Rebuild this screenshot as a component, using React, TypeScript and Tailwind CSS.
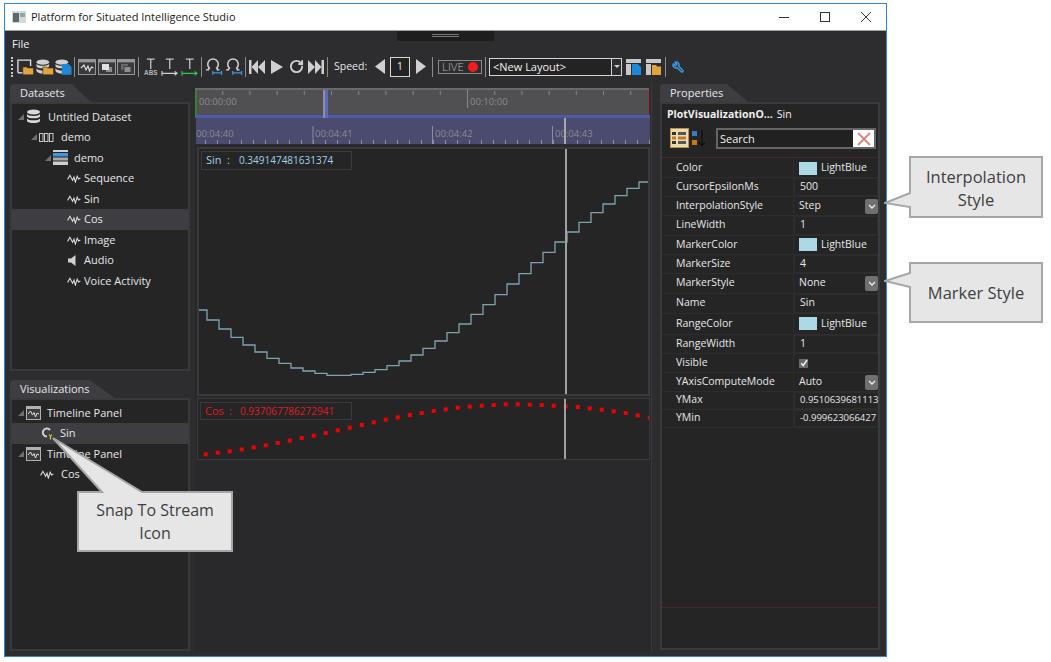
import React from "react";
import { RotateCw, Wrench } from "lucide-react";

const sinY = [310, 320, 329, 337.3, 345, 352, 358.3, 363.3, 368, 371, 373.3, 375.3, 375.3, 374.3, 372.3, 369.7, 365.7, 361, 355, 348.3, 341, 332.7, 324, 314.3, 304.7, 294.7, 284, 273.7, 262.7, 252.3, 242, 232, 222.3, 212.7, 204, 195.7, 188.3, 182];
const cosY = [460, 455, 451, 445, 439, 433, 426, 419, 411, 404, 396, 388, 380, 372, 364, 356, 349, 342, 336, 330, 325, 320, 317, 314, 312, 310, 310, 311, 312, 314, 316, 318, 322, 326, 331, 336, 343, 350];

const stepPath = () => {
  let d = `M199 ${sinY[0]}`;
  sinY.forEach((y, i) => {
    const x = 207 + i * 12;
    d += ` H${x} V${sinY[i + 1] ?? y}`;
  });
  return d.replace(/ H[\d.]+ V[\d.]+$/, " H648");
};

const Wave = () => (
  <svg width="14" height="10" viewBox="0 0 15 11" fill="none" stroke="#dcdcdc" strokeWidth="1.2" className="shrink-0">
    <polyline points="0.5,7 3,2.5 6,8 7.5,4.5 9,10 11,3.5 12.5,6.5 14.5,5.5" />
  </svg>
);

const Database = ({ size = 15, color = "#d8d8d8" }: { size?: number; color?: string }) => (
  <svg width={size} height={size} viewBox="0 0 15 15" className="shrink-0">
    <ellipse cx="7.5" cy="3" rx="6.5" ry="2.6" fill={color} />
    <path d="M1 5 C2 7.6 13 7.6 14 5 V7.4 C13 10 2 10 1 7.4Z" fill={color} />
    <path d="M1 9.4 C2 12 13 12 14 9.4 V12 C13 14.8 2 14.8 1 12Z" fill={color} />
  </svg>
);

const TreeArrow = () => (
  <svg width="6" height="6" viewBox="0 0 6 6" className="shrink-0">
    <polygon points="6,0 6,6 0,6" fill="#6f6f72" />
  </svg>
);

const PanelIcon = () => (
  <svg width="15" height="14" viewBox="0 0 15 14" className="shrink-0">
    <rect x="0.5" y="0.5" width="14" height="13" fill="#3c3c3e" stroke="#b0b0b0" />
    <rect x="1" y="1" width="13" height="2" fill="#b0b0b0" />
    <polyline points="2,8 4.5,5 6.5,9 8,6.5 9.5,11 11,7 13,8" fill="none" stroke="#e0e0e0" />
  </svg>
);

const Bars = () => (
  <svg width="15" height="15" viewBox="0 0 15 15" className="shrink-0">
    <rect y="0" width="15" height="2" fill="#d0d0d0" />
    <rect y="3" width="15" height="3.5" fill="#3a96dd" />
    <rect y="7.5" width="15" height="3" fill="#a8a8a8" />
    <rect y="11.5" width="15" height="3.5" fill="#d0d0d0" />
  </svg>
);

const Magnet = ({ small = false }: { small?: boolean }) =>
  small ? (
    <svg width="12" height="13" viewBox="0 0 12 13" className="shrink-0">
      <path d="M8 3 A4 4 0 1 0 5 9.5" fill="none" stroke="#d0d0d0" strokeWidth="2" />
      <path d="M7 7.5 L8.5 9.5 L10 7.5 M8.5 9.5 V12.5" fill="none" stroke="#d4c820" strokeWidth="1.2" />
    </svg>
  ) : (
    <svg width="20" height="20" viewBox="0 0 20 20">
      <path d="M4 13 L5.5 11 A5.4 5.4 0 1 1 13 11 L14.5 13" fill="none" stroke="#d0d0d0" strokeWidth="1.6" />
      <path d="M2 13 H5 M13 13 H16" stroke="#d0d0d0" strokeWidth="1.2" />
      <path d="M9 14 V18 M9 16 H18 M18 14 V18" fill="none" stroke="#3a96dd" strokeWidth="1.4" />
    </svg>
  );

const Tool = ({ children }: { children: React.ReactNode }) => (
  <div className="w-[19.5px] h-[20px] flex items-center justify-center shrink-0">{children}</div>
);

const Sep = ({ className }: { className: string }) => <div className={`w-px h-[20px] bg-[#8c8c8c] shrink-0 ${className}`} />;

const Folder = ({ x, y }: { x: number; y: number }) => (
  <path d={`M${x} ${y} h4 l1 1 h6 v7 h-11z`} fill="#e3a33a" stroke="#2d2d30" strokeWidth="0.6" />
);

const Save = ({ x, y }: { x: number; y: number }) => (
  <path d={`M${x} ${y} h7 l3 3 v8 h-10z`} fill="#1f87d8" />
);

const DbTool = ({ save }: { save?: boolean }) => (
  <svg width="20" height="20" viewBox="0 0 20 20">
    <ellipse cx="8" cy="5" rx="6.5" ry="2.6" fill="#d0d0d0" />
    <path d="M1.5 7 C3 9.4 13 9.4 14.5 7 V9.4 C13 12 3 12 1.5 9.4Z" fill="#d0d0d0" />
    <path d="M1.5 11.4 C3 14 9 14 10 13.6 V16.6 C7 17 3 16.6 1.5 14Z" fill="#d0d0d0" />
    {save ? <Save x={8} y={7} /> : <Folder x={8} y={10} />}
  </svg>
);

const BoardTool = ({ kind }: { kind: "wave" | "front" | "back" }) => (
  <svg width="19" height="18" viewBox="0 0 19 18">
    <rect x="0.5" y="1.5" width="17" height="15" fill="#3a3a3c" stroke="#969696" />
    <rect x="1" y="2" width="16" height="2.4" fill="#969696" />
    {kind === "wave" && <polyline points="3,10 6,7 8,12 10,8 11.5,13 13.5,9 15.5,10" fill="none" stroke="#e4e4e4" strokeWidth="1.1" />}
    {kind === "front" && (
      <>
        <rect x="8" y="9" width="6" height="5" fill="#8a8a8a" />
        <rect x="4" y="6" width="7" height="6" fill="#e0e0e0" />
      </>
    )}
    {kind === "back" && (
      <>
        <rect x="4" y="6" width="7" height="6" fill="#6a6a6a" />
        <rect x="7" y="8.5" width="7" height="6" fill="#8e8e8e" stroke="#3a3a3c" />
      </>
    )}
  </svg>
);

const TextTool = ({ kind }: { kind: "abs" | "white" | "green" }) => {
  const c = kind === "green" ? "#35c44a" : "#d0d0d0";
  return (
    <svg width="20" height="20" viewBox="0 0 20 20">
      <path d="M6 2 H14 M10 2 V12" fill="none" stroke="#c8c8c8" strokeWidth="1.3" />
      {kind === "abs" ? (
        <text x="10" y="18" textAnchor="middle" fontSize="6.5" fontWeight="700" fontFamily="'Liberation Sans', sans-serif" fill="#b8b8b8">
          ABS
        </text>
      ) : (
        <path d="M2 14 V19 M2 16.5 H17 M15 14.5 L17.5 16.5 L15 18.5" fill="none" stroke={c} strokeWidth="1.2" />
      )}
    </svg>
  );
};

const Nav = ({ kind }: { kind: "first" | "play" | "last" }) => (
  <svg width="18" height="18" viewBox="0 0 18 18" fill="#cfcfcf">
    {kind === "first" && <path d="M1 2 H3.5 V16 H1Z M3.5 9 L10 2 V16Z M10 9 L17 2 V16Z" />}
    {kind === "play" && <path d="M3 2 L15 9 L3 16Z" />}
    {kind === "last" && <path d="M1 2 L8 9 L1 16Z M8 2 L14.5 9 L8 16Z M14.5 2 H17 V16 H14.5Z" />}
  </svg>
);

type TreeItem = { label: string; icon: React.ReactNode; row: string; arrow?: boolean; selected?: boolean; gap: string };

const datasetRows: TreeItem[] = [
  { label: "Untitled Dataset", icon: <Database />, row: "pl-[6px]", arrow: true, gap: "gap-[4px]" },
  {
    label: "demo",
    icon: (
      <svg width="15" height="9" viewBox="0 0 15 9" fill="none" stroke="#c8c8c8" className="shrink-0">
        <rect x="0.5" y="0.5" width="3.5" height="8" />
        <rect x="5.5" y="0.5" width="3.5" height="8" />
        <rect x="10.5" y="0.5" width="3.5" height="8" />
      </svg>
    ),
    row: "pl-[19px]",
    arrow: true,
    gap: "gap-[4px]",
  },
  { label: "demo", icon: <Bars />, row: "pl-[33px]", arrow: true, gap: "gap-[3px]" },
  { label: "Sequence", icon: <Wave />, row: "pl-[55px]", gap: "gap-0" },
  { label: "Sin", icon: <Wave />, row: "pl-[55px]", gap: "gap-0" },
  { label: "Cos", icon: <Wave />, row: "pl-[55px]", selected: true, gap: "gap-0" },
  { label: "Image", icon: <Wave />, row: "pl-[55px]", gap: "gap-0" },
  {
    label: "Audio",
    icon: (
      <svg width="14" height="13" viewBox="0 0 14 13" className="shrink-0">
        <path d="M1 4.5 H4 L8.5 1 V12 L4 8.5 H1Z" fill="#d0d0d0" />
      </svg>
    ),
    row: "pl-[55px]",
    gap: "gap-0",
  },
  { label: "Voice Activity", icon: <Wave />, row: "pl-[55px]", gap: "gap-0" },
];

const vizRows: TreeItem[] = [
  { label: "Timeline Panel", icon: <PanelIcon />, row: "pl-[6px]", arrow: true, gap: "gap-[3px]" },
  { label: "Sin", icon: <Magnet small />, row: "pl-[30px]", selected: true, gap: "gap-[3px]" },
  { label: "Timeline Panel", icon: <PanelIcon />, row: "pl-[6px]", arrow: true, gap: "gap-[3px]" },
  { label: "Cos", icon: <Wave />, row: "pl-[28px]", gap: "gap-[4px]" },
];

const Tree = ({ rows }: { rows: TreeItem[] }) => (
  <div className="pt-[2.5px]">
    {rows.map((r, i) => (
      <div key={i} className={`h-[20.5px] flex items-center ${r.row} ${r.selected ? "bg-[#3e3e42]" : ""}`}>
        {r.arrow && <span className="mr-[2px]"><TreeArrow /></span>}
        <span className={`flex items-center ${r.gap}`}>
          <span className="mr-[3px] flex">{r.icon}</span>
          <span className="text-[11px] text-[#e6e6e6] whitespace-nowrap">{r.label}</span>
        </span>
      </div>
    ))}
  </div>
);

const Tab = ({ label, width }: { label: string; width: string }) => (
  <div className={`h-[18px] ${width} bg-[#3e3e42] rounded-tl-[4px] [clip-path:polygon(0_0,76%_0,100%_100%,0_100%)] flex items-center pl-[10px] text-[11px] text-[#e6e6e6] shrink-0`}>
    {label}
  </div>
);

const Swatch = () => (
  <div className="flex items-center gap-[4px]">
    <div className="w-[18px] h-[13px] bg-[#add8e6]" />
    <span>LightBlue</span>
  </div>
);

const Chevron = () => (
  <div className="w-[13px] h-[15px] rounded-[2px] bg-[#707070] flex items-center justify-center absolute right-0 top-[2px]">
    <svg width="8" height="5" viewBox="0 0 8 5" fill="none" stroke="#f0f0f0" strokeWidth="1.3">
      <path d="M1 1 L4 4 L7 1" />
    </svg>
  </div>
);

type Prop = { name: string; h: string; value?: string; kind?: "color" | "combo" | "check"; box?: boolean; narrow?: boolean };

const props: Prop[] = [
  { name: "Color", h: "h-[19px]", kind: "color" },
  { name: "CursorEpsilonMs", h: "h-[19px]", value: "500", box: true },
  { name: "InterpolationStyle", h: "h-[19px]", value: "Step", kind: "combo" },
  { name: "LineWidth", h: "h-[19.5px]", value: "1", box: true },
  { name: "MarkerColor", h: "h-[19.5px]", kind: "color" },
  { name: "MarkerSize", h: "h-[19px]", value: "4", box: true },
  { name: "MarkerStyle", h: "h-[19.5px]", value: "None", kind: "combo" },
  { name: "Name", h: "h-[20px]", value: "Sin", box: true },
  { name: "RangeColor", h: "h-[21.5px]", kind: "color" },
  { name: "RangeWidth", h: "h-[19px]", value: "1", box: true },
  { name: "Visible", h: "h-[19px]", kind: "check" },
  { name: "YAxisComputeMode", h: "h-[18.5px]", value: "Auto", kind: "combo" },
  { name: "YMax", h: "h-[18px]", value: "0.9510639681113", box: true, narrow: true },
  { name: "YMin", h: "h-[18px]", value: "-0.999623066427", box: true, narrow: true },
];

const PropRow = ({ p }: { p: Prop }) => (
  <div className={`${p.h} flex items-stretch border-b border-[#2d2d30] text-[10.5px] text-[#e6e6e6]`}>
    <div className="w-[132px] pl-[14px] flex items-center border-r border-[#2d2d30] shrink-0 whitespace-nowrap">{p.name}</div>
    <div className={`relative flex-1 min-w-0 pl-[5px] flex items-center whitespace-nowrap ${p.box ? "border border-[#2d2d30]" : ""} ${p.narrow ? "text-[9.5px]" : ""}`}>
      {p.kind === "color" && <Swatch />}
      {p.kind === "check" && (
        <div className="w-[9px] h-[9px] bg-[#6a6a6a] flex items-center justify-center">
          <svg width="8" height="8" viewBox="0 0 8 8" fill="none" stroke="#f0f0f0" strokeWidth="1.5">
            <path d="M1.2 4.2 L3.2 6.5 L7 1" />
          </svg>
        </div>
      )}
      {p.value}
      {p.kind === "combo" && <Chevron />}
    </div>
  </div>
);

const Timeline = () => {
  const topTicks = Array.from({ length: 17 }, (_, i) => 196 + (i + 1) * 27.2);
  const minorTicks = Array.from({ length: 38 }, (_, i) => 206 + i * 12);
  const labelClass = { fontSize: 9.5, fill: "#8a8a8c" };
  return (
    <svg width="456" height="61" viewBox="196 84 456 61" className="block shrink-0">
      <rect x="196" y="84" width="456" height="61" fill="#2d2d30" />
      <rect x="196" y="88" width="454" height="2" fill="#6a6a6a" />
      <rect x="197" y="90" width="452" height="25" fill="#504f52" />
      <rect x="196" y="90" width="1.5" height="28" fill="#2f8f2f" />
      <rect x="649" y="90" width="1" height="25" fill="#a03030" />
      <rect x="197" y="115" width="454" height="3" fill="#4f5aa6" />
      <rect x="197" y="118" width="454" height="26" fill="#4a4b6e" />
      {topTicks.map((x) => (
        <rect key={x} x={x} y={x === 468 ? 90 : 91} width="1" height={x === 468 ? 18 : 4} fill="#87868a" />
      ))}
      <rect x="324" y="90" width="2.5" height="28" fill="#8e8ea8" />
      <rect x="326.5" y="90" width="2.5" height="28" fill="#5a68c4" />
      <text x="200" y="105" style={labelClass}>00:00:00</text>
      <text x="471" y="105" style={labelClass}>00:10:00</text>
      {minorTicks.map((x) => (
        <rect key={x} x={x} y="140" width="1" height="4" fill="#8d8ea6" />
      ))}
      {[313.5, 433, 553].map((x) => (
        <rect key={x} x={x} y="126" width="1" height="18" fill="#8d8ea6" />
      ))}
      <text x="197" y="137" style={labelClass}>00:04:40</text>
      <text x="316" y="137" style={labelClass}>00:04:41</text>
      <text x="436" y="137" style={labelClass}>00:04:42</text>
      <text x="556" y="137" style={labelClass}>00:04:43</text>
      <rect x="565" y="118" width="2" height="26" fill="#a8a8a8" />
    </svg>
  );
};

type CalloutProps = { box: string; viewBox: string; w: number; h: number; path: string; text: string; label: React.ReactNode };

const Callout = ({ box, viewBox, w, h, path, text, label }: CalloutProps) => (
  <div className={`absolute ${box}`}>
    <svg width={w} height={h} viewBox={viewBox} className="absolute inset-0">
      <path d={path} fill="#e6e6e6" stroke="#a6a6a6" strokeWidth="2" />
    </svg>
    <div className={`absolute ${text} flex items-center justify-center text-center leading-[23px] text-[#404040] font-['Open_Sans',sans-serif]`}>
      {label}
    </div>
  </div>
);

export default function App() {
  return (
    <div className="relative w-[1051px] h-[662px] bg-white pl-[4px] pt-[3px] overflow-hidden font-['Open_Sans','Noto_Sans',sans-serif]">
      <div className="w-[883px] h-[654px] border border-[#2b88d8] flex flex-col">
        <div className="h-[27px] bg-white border-b border-[#a0a0a0] flex items-center shrink-0">
          <svg width="14" height="12" viewBox="0 0 14 12" className="ml-[7px] mr-[5px]">
            <rect width="14" height="12" fill="#d4d8d8" />
            <rect x="1" y="2" width="6" height="9" fill="#5a6a6a" />
            <rect x="8" y="2" width="5" height="4" fill="#8aa8a0" />
          </svg>
          <span className="text-[11px] text-[#1a1a1a]">Platform for Situated Intelligence Studio</span>
          <div className="ml-auto flex items-center h-full">
            <div className="w-[40px] flex justify-center mr-[1px]">
              <div className="w-[10px] h-px bg-[#333]" />
            </div>
            <div className="w-[40px] flex justify-center">
              <div className="w-[10px] h-[10px] border border-[#333]" />
            </div>
            <div className="w-[41px] flex justify-center">
              <svg width="10" height="10" viewBox="0 0 10 10" stroke="#333">
                <path d="M0 0 L10 10 M10 0 L0 10" />
              </svg>
            </div>
          </div>
        </div>

        <div className="relative flex-1 bg-[#2d2d30] min-h-0 flex flex-col">
          <div className="absolute left-[392px] top-0 w-[97px] h-[10px] bg-[#1e1e1f] flex flex-col items-center pt-[3px] gap-[1px]">
            <div className="w-[27px] h-px bg-[#777]" />
            <div className="w-[27px] h-px bg-[#777]" />
          </div>
          <div className="h-[23px] pl-[7px] pt-[5px] text-[11px] leading-[15px] text-[#f0f0f0] shrink-0">File</div>

          <div className="h-[25px] flex items-center pl-[6px] shrink-0">
            <div className="w-[2px] h-[20px] mr-[2.25px] border-l-2 border-dotted border-[#c8c8c8] shrink-0" />
            <Tool>
              <svg width="20" height="20" viewBox="0 0 20 20">
                <path d="M3 16 V3 H16 V9" fill="none" stroke="#e0e0e0" strokeWidth="1.4" />
                <path d="M3 16 H8" stroke="#e0e0e0" strokeWidth="1.4" />
                <Folder x={8} y={10} />
              </svg>
            </Tool>
            <Tool><DbTool /></Tool>
            <Tool><DbTool save /></Tool>
            <Sep className="ml-0 mr-[3.25px]" />
            <Tool><BoardTool kind="wave" /></Tool>
            <Tool><BoardTool kind="front" /></Tool>
            <Tool><BoardTool kind="back" /></Tool>
            <Sep className="ml-[1.5px] mr-[1.5px]" />
            <Tool><TextTool kind="abs" /></Tool>
            <Tool><TextTool kind="white" /></Tool>
            <Tool><TextTool kind="green" /></Tool>
            <Sep className="ml-[2px] mr-[2px]" />
            <Tool><Magnet /></Tool>
            <Tool><Magnet /></Tool>
            <Sep className="ml-[2px] mr-[1.5px]" />
            <Tool><Nav kind="first" /></Tool>
            <Tool><Nav kind="play" /></Tool>
            <Tool><RotateCw size={15} strokeWidth={3} color="#cfcfcf" /></Tool>
            <Tool><Nav kind="last" /></Tool>
            <Sep className="ml-[1.5px] mr-[6px]" />
            <span className="text-[10.5px] text-[#e6e6e6] w-[41px] shrink-0">Speed:</span>
            <svg width="10" height="15" viewBox="0 0 10 15" className="shrink-0 mr-[5px]">
              <polygon points="10,0 10,15 0,7.5" fill="#d0d0d0" />
            </svg>
            <div className="w-[20px] h-[20px] border border-[#d8d8d8] bg-[#232324] text-[11px] text-[#e6e6e6] flex items-center justify-center shrink-0">1</div>
            <svg width="10" height="15" viewBox="0 0 10 15" className="shrink-0 ml-[6px] mr-[6px]">
              <polygon points="0,0 0,15 10,7.5" fill="#d0d0d0" />
            </svg>
            <Sep className="mr-[5px]" />
            <div className="w-[44px] h-[14px] border border-[#8a8a8a] flex items-center justify-between px-[3px] text-[11.5px] font-light text-[#b8b8b8] shrink-0">
              <span>LIVE</span>
              <span className="w-[10px] h-[10px] rounded-full bg-[#f21c1c]" />
            </div>
            <Sep className="ml-[3px] mr-[3px] w-[2px]" />
            <div className="w-[133px] h-[18px] border border-[#d4d4d4] flex items-stretch bg-[#232324] shrink-0">
              <span className="flex-1 pl-[3px] text-[11px] leading-[16px] text-[#f0f0f0]">&lt;New Layout&gt;</span>
              <div className="w-[10px] border-l border-[#d4d4d4] bg-[#2d2d30] flex items-center justify-center">
                <div className="w-0 h-0 border-x-[3px] border-x-transparent border-t-[3px] border-t-[#d0d0d0]" />
              </div>
            </div>
            <svg width="17" height="16" viewBox="0 0 17 16" className="ml-[3px] shrink-0">
              <rect x="1" y="0" width="15" height="4" fill="#c8c8c8" />
              <rect x="1" y="5" width="5" height="11" fill="#c8c8c8" />
              <path d="M7 5 H13 L16 8 V16 H7Z" fill="#1f87d8" />
            </svg>
            <svg width="17" height="16" viewBox="0 0 17 16" className="ml-[3px] shrink-0">
              <rect x="1" y="0" width="15" height="4" fill="#c8c8c8" />
              <rect x="1" y="5" width="5" height="11" fill="#c8c8c8" />
              <path d="M7 6 H11 L12 7.5 H16 V16 H7Z" fill="#e3a33a" />
            </svg>
            <Sep className="ml-[3px] mr-[7px]" />
            <Wrench size={12} strokeWidth={3} color="#3a96dd" className="shrink-0 -ml-[1px] -scale-x-100" />
          </div>

          <div className="flex mt-[5px] pl-[5px] items-start">
            <div className="w-[180px] shrink-0 flex flex-col">
              <Tab label="Datasets" width="w-[81px]" />
              <div className="h-[269px] bg-[#252526] border-2 border-[#3a3a3e] overflow-hidden">
                <Tree rows={datasetRows} />
              </div>
              <div className="mt-[9px]">
                <Tab label="Visualizations" width="w-[105px]" />
              </div>
              <div className="h-[253px] bg-[#252526] border-2 border-[#3a3a3e] overflow-hidden">
                <Tree rows={vizRows} />
              </div>
            </div>

            <div className="w-[457px] h-[568px] ml-[5px] bg-[#29292b] flex flex-col border-r border-[#3a3a3e]">
              <Timeline />
              <div className="ml-[2px] w-[453px] h-[249px] mt-[2px] border-2 border-[#3a3a3e] bg-[#252526] relative">
                <svg width="449" height="245" viewBox="199 149 449 245" className="absolute left-0 top-0">
                  <path d={stepPath()} fill="none" stroke="#7fa3ae" strokeWidth="1.3" />
                  <rect x="565" y="149" width="2" height="245" fill="#a0a0a0" />
                </svg>
                <div className="relative mt-[2px] ml-[2px] w-[151px] h-[19px] border border-[#3a3a3e] text-[#9fd2e6] flex items-center pl-[4px] whitespace-nowrap">
                  <span className="w-[21px] text-[11px]">Sin</span>
                  <span className="w-[12px] text-[11px]">:</span>
                  <span className="text-[10px]">0.349147481631374</span>
                </div>
              </div>
              <div className="ml-[2px] w-[453px] h-[62px] mt-[2px] border border-[#3a3a3e] bg-[#252526] relative overflow-hidden">
                <svg width="451" height="60" viewBox="199 398 451 60" className="absolute left-0 top-0">
                  {cosY.map((y, i) => (
                    <rect key={i} x={204.7 + i * 12} y={300 + y / 3 - 2} width="4" height="4" fill="#f00000" />
                  ))}
                  <rect x="565" y="398" width="2" height="60" fill="#a0a0a0" />
                </svg>
                <div className="relative mt-[3px] ml-[2px] w-[152px] h-[18px] border border-[#3a3a3e] text-[#e01a1f] flex items-center pl-[4px] whitespace-nowrap">
                  <span className="w-[24px] text-[11px]">Cos</span>
                  <span className="w-[11px] text-[11px]">:</span>
                  <span className="text-[10px]">0.937067786272941</span>
                </div>
              </div>
            </div>

            <div className="w-[220px] ml-[8px] shrink-0 flex flex-col">
              <Tab label="Properties" width="w-[88px]" />
              <div className="h-[548px] bg-[#252526] border-2 border-[#3a3a3e] flex flex-col">
                <div className="h-[22px] pl-[5px] text-[10.5px] text-[#f0f0f0] flex items-center shrink-0">
                  <span className="font-bold">PlotVisualizationO...</span>
                  <span className="ml-[4px]">Sin</span>
                </div>
                <div className="h-[31px] flex items-start pt-[2px] shrink-0">
                  <div className="ml-[8px] w-[19px] h-[20px] bg-[#e8dcb4] border border-[#c09040] flex items-center justify-center">
                    <svg width="15" height="14" viewBox="0 0 15 14">
                      <rect x="0" y="1" width="4" height="3" fill="#333" />
                      <rect x="0" y="5.5" width="4" height="3" fill="#c8761c" />
                      <rect x="0" y="10" width="4" height="3" fill="#333" />
                      <rect x="6" y="1" width="8" height="3" fill="#555" />
                      <rect x="6" y="5.5" width="8" height="3" fill="#c8761c" />
                      <rect x="6" y="10" width="8" height="3" fill="#555" />
                    </svg>
                  </div>
                  <svg width="17" height="20" viewBox="0 0 17 20" className="ml-[2px]">
                    <rect x="1" y="3" width="5" height="5" fill="#3a78c8" />
                    <rect x="1" y="12" width="5" height="5" fill="#c8761c" />
                    <path d="M11 2 V17 M8 14 L11 18 L14 14" fill="none" stroke="#111" strokeWidth="1.3" />
                  </svg>
                  <div className="ml-[8px] w-[160px] h-[21px] border-2 border-[#666] bg-[#212122] flex items-stretch">
                    <span className="flex-1 pl-[2px] text-[11px] leading-[17px] text-[#f0f0f0]">Search</span>
                    <div className="w-[21px] bg-white flex items-center justify-center">
                      <svg width="14" height="14" viewBox="0 0 14 14" stroke="#dc8080" strokeWidth="1.8">
                        <path d="M1 1 L13 13 M13 1 L1 13" />
                      </svg>
                    </div>
                  </div>
                </div>
                <div className="flex-1 min-h-0 border-t border-b border-[#4a2628] pt-[1px]">
                  {props.map((p) => (
                    <PropRow key={p.name} p={p} />
                  ))}
                </div>
                <div className="h-[40px] shrink-0" />
              </div>
            </div>
          </div>
        </div>
      </div>

      <Callout
        box="left-[52px] top-[437px] w-[182px] h-[116px]"
        viewBox="52 437 182 116"
        w={182}
        h={116}
        path="M53 438 L102 492 H78 V551 H232 V492 H142Z"
        text="left-[26px] top-[56px] w-[154px] h-[58px] text-[16px]"
        label={
          <>
            Snap To Stream
            <br />
            Icon
          </>
        }
      />
      <Callout
        box="left-[884px] top-[156px] w-[160px] h-[62px]"
        viewBox="884 156 160 62"
        w={160}
        h={62}
        path="M885 203 L910 193 V157 H1042 V217 H910 V207Z"
        text="left-[26px] top-[2px] w-[132px] h-[60px] text-[16.5px]"
        label={
          <>
            Interpolation
            <br />
            Style
          </>
        }
      />
      <Callout
        box="left-[884px] top-[262px] w-[160px] h-[61px]"
        viewBox="884 262 160 61"
        w={160}
        h={61}
        path="M885 281 L910 273 V263 H1042 V322 H910 V287Z"
        text="left-[26px] top-[9px] w-[132px] h-[43px] text-[16.5px]"
        label="Marker Style"
      />
    </div>
  );
}
